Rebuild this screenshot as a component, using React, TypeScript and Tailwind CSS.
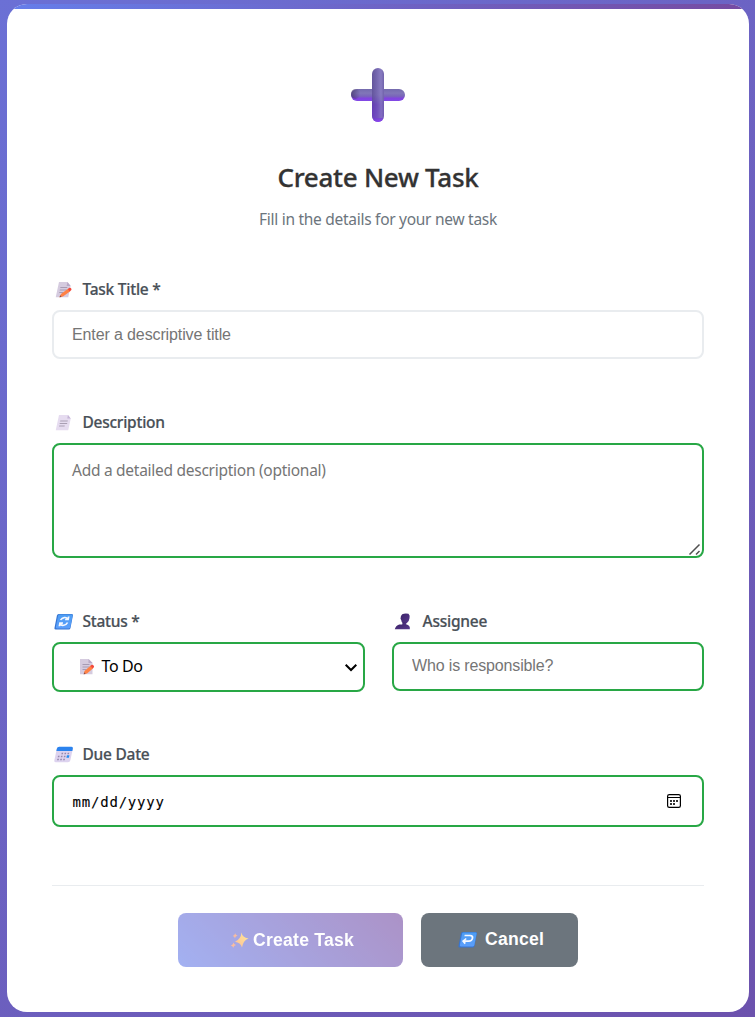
import React from "react";

function Memo({ skew = true }: { skew?: boolean }) {
  return (
    <svg width="18" height="18" viewBox="0 0 18 18" className="shrink-0">
      <g transform={skew ? "translate(3.2 0) skewX(-12)" : "translate(0 0)"}>
        <path d="M2 1h8.500l4 4v11.300H2z" fill="#d5cbdf" />
        <path d="M10.500 1v4h4z" fill="#b7a9c6" />
        <path d="M4.500 6.500h7M4.500 9h7M4.500 11.500h4" stroke="#a79bb3" strokeWidth="1" />
        <path d="M6.500 13l6.300-5.400 2.400 2.600-6.200 5.200-3.300.9z" fill="#ff8145" />
        <path d="M12.300 8l1.500-1.200q1-.3 1.800.6t.3 1.800l-1.200 1.200z" fill="#f4483c" />
        <path d="M5.700 16.300l.6-2 1.400 1.600z" fill="#8b4a45" />
      </g>
    </svg>
  );
}

function PageIcon() {
  return (
    <svg width="18" height="18" viewBox="0 0 18 18" className="shrink-0">
      <g transform="translate(3.2 0) skewX(-12)">
        <path d="M2 1h9l3.500 3.500v11.800H2z" fill="#e6dcf0" />
        <path d="M11 1v3.500h3.500z" fill="#c5b5d6" />
        <path d="M4.500 7h7.500M4.500 9.500h7.500M4.500 12h5.500" stroke="#a99fb3" strokeWidth="1" />
      </g>
    </svg>
  );
}

function BlueTile({ children }: { children: React.ReactNode }) {
  return (
    <svg width="20" height="18" viewBox="0 0 20 18" className="-ml-px shrink-0">
      <defs>
        <linearGradient id="tile" x2="0" y2="1">
          <stop stopColor="#4d9df3" />
          <stop offset="1" stopColor="#5b9efb" />
        </linearGradient>
      </defs>
      <g transform="translate(3.4 0) skewX(-11)">
        <rect x="1" y="1" width="16" height="15.500" rx="1.500" fill="#3775d2" />
        <rect x="2.200" y="1.400" width="14.500" height="14" rx="1.300" fill="url(#tile)" />
        <g fill="none" stroke="#f5f8ff" strokeWidth="1.700">{children}</g>
      </g>
    </svg>
  );
}

function Person() {
  return (
    <svg width="18" height="18" viewBox="0 0 18 18" className="shrink-0">
      <defs>
        <linearGradient id="person" x1="0" y1="0" x2="1" y2="1">
          <stop stopColor="#3b2368" />
          <stop offset="1" stopColor="#59388e" />
        </linearGradient>
      </defs>
      <g fill="url(#person)">
        <path d="M8.200 1.200Q11 0 14.500 .8q1.800 1.500 1 4.500-.5 3.800-2.800 5h-3.500Q7.400 10 7.200 7l-.7-1.200Q6.200 3 8.200 1.200z" />
        <path d="M8.600 9h3.600v3H8.200z" />
        <path d="M.8 16.200q.8-3.400 4.500-4.700h7.500q3.500 1 3 4.700z" />
      </g>
    </svg>
  );
}

function CalendarEmoji() {
  return (
    <svg width="20" height="18" viewBox="0 0 20 18" className="-ml-px shrink-0">
      <g transform="translate(3.4 0) skewX(-12)">
        <rect x="1" y="1" width="16" height="15.300" rx="2" fill="#ddd3ef" />
        <path d="M1 5V2.800q0-2 2-2h12q2 0 2 2V5z" fill="#2b83ee" />
        <path d="M6.700 6.700h1.600v1.600H6.700zM9.700 6.700h1.600v1.600H9.700zM12.700 6.700h1.600v1.600h-1.600zM3.700 9.700h1.600v1.600H3.700zM6.700 9.700h1.600v1.600H6.700zM9.700 9.700h1.600v1.600H9.700zM3.700 12.700h1.600v1.600H3.700zM6.700 12.700h1.600v1.600H6.700zM9.700 12.700h1.600v1.600H9.700z" fill="#9588ad" />
        <path d="M12.500 9.300h2.500v2.500h-2.500z" fill="#248cf2" />
      </g>
    </svg>
  );
}

function Label({ icon, children }: { icon: React.ReactNode; children: React.ReactNode }) {
  return (
    <div className="flex h-[21px] items-center text-[15.5px] font-medium leading-[21px] tracking-[-0.25px] text-[#495057]">
      <span className="flex w-[30.5px] shrink-0 pl-[2px]">{icon}</span>
      <span className="whitespace-nowrap [-webkit-text-stroke:0.2px_#495057]">{children}</span>
    </div>
  );
}

const field = "block w-full rounded-[8px] border-2 bg-white px-[18px] outline-none placeholder:text-[#757575] placeholder:opacity-100";

export default function App() {
  return (
    <div className="h-[1017px] bg-[linear-gradient(135deg,#6b70d5,#6c52ad)] pt-1 pr-[6px] pl-[7px] font-['Noto_Sans',sans-serif]">
      <main className="flex h-[1008px] flex-col overflow-hidden rounded-[20px] bg-white">
        <div className="h-[5px] shrink-0 bg-[linear-gradient(90deg,#667eea,#764ba2)]" />
        <div className="px-[45px]">
          <header className="flex h-[270px] flex-col items-center pt-[58px]">
            <svg width="56" height="56" viewBox="0 0 56 56">
              <defs>
                <linearGradient id="across" x2="0" y2="1">
                  <stop stopColor="#746bad" />
                  <stop offset=".35" stopColor="#8176b8" />
                  <stop offset=".6" stopColor="#7965b9" />
                  <stop offset=".78" stopColor="#8143df" />
                  <stop offset="1" stopColor="#8149e5" />
                </linearGradient>
                <linearGradient id="upright">
                  <stop stopColor="#63559c" />
                  <stop offset=".4" stopColor="#7567b0" />
                  <stop offset=".75" stopColor="#887bc1" />
                  <stop offset="1" stopColor="#7163ab" />
                </linearGradient>
                <linearGradient id="foot" x2="0" y2="1">
                  <stop offset=".5" stopColor="#6429c6" stopOpacity="0" />
                  <stop offset=".68" stopColor="#6429c6" stopOpacity=".55" />
                  <stop offset=".92" stopColor="#7131d4" stopOpacity=".6" />
                  <stop offset="1" stopColor="#8f42fa" />
                </linearGradient>
                <linearGradient id="tip">
                  <stop stopColor="#403267" />
                  <stop offset="1" stopColor="#403267" stopOpacity="0" />
                </linearGradient>
                <linearGradient id="footSide">
                  <stop stopColor="white" />
                  <stop offset=".5" stopColor="#aaa" />
                  <stop offset=".8" stopColor="#444" />
                </linearGradient>
                <mask id="footMask"><rect x="22" y="1" width="12" height="50" fill="url(#footSide)" /><rect x="22" y="51" width="12" height="4" fill="white" /></mask>
              </defs>
              <rect x="1" y="22" width="54" height="12" rx="6" fill="url(#across)" />
              <rect x="1" y="22" width="9" height="10" rx="5" fill="url(#tip)" opacity=".7" />
              <rect x="22" y="1" width="12" height="54" rx="6" fill="url(#upright)" />
              <rect x="22" y="1" width="12" height="54" rx="6" fill="url(#foot)" mask="url(#footMask)" />
            </svg>
            <h1 className="mt-[34px] h-[40px] whitespace-nowrap text-[26px] font-medium leading-[40px] tracking-[-0.28px] text-[#333] [-webkit-text-stroke:0.3px_#333]">Create New Task</h1>
            <p className="mt-[11px] h-[22px] whitespace-nowrap text-[15.5px] leading-[22px] tracking-[-0.28px] text-[#6c757d]">Fill in the details for your new task</p>
          </header>
          <section className="h-[133px]">
            <Label icon={<Memo />}>Task Title *</Label>
            <input className={`${field} mt-[10px] h-[49px] border-[#e9ecef] font-['Liberation_Sans',sans-serif] text-[16px] tracking-[-0.12px]`} placeholder="Enter a descriptive title" />
          </section>
          <section className="h-[199px]">
            <Label icon={<PageIcon />}>Description</Label>
            <div className="relative mt-[10px]">
              <textarea className={`${field} h-[115px] resize-none border-[#28a745] pt-[13px] text-[15.5px] leading-[24px] tracking-[-0.27px]`} placeholder="Add a detailed description (optional)" />
              <svg className="absolute right-[3px] bottom-[2px]" width="13" height="13" viewBox="0 0 13 13">
                <path d="M1.500 11.500L11.500 1.500M8 11.500l3.500-3.500" stroke="#505050" strokeWidth="1.500" />
              </svg>
            </div>
          </section>
          <section className="grid h-[133px] grid-cols-[313px_312px] items-start gap-[27px]">
            <div>
              <Label icon={<BlueTile><path d="M5.500 7a4.200 4 0 0 1 7-1.200M13 3.500v3h-3M13 9.500a4.200 4 0 0 1-7.200 1.500M5.500 13.200v-3h3" /></BlueTile>}>Status *</Label>
              <button className="mt-[10px] flex h-[50px] w-full items-center rounded-[8px] border-2 border-[#28a745] bg-white pl-[24px] pr-[4px] text-[16px] tracking-[-0.4px] text-black">
                <Memo skew={false} />
                <span className="mb-[2px] ml-[5.5px] flex-1 text-left">To Do</span>
                <svg width="16" height="16" viewBox="0 0 16 16"><path d="M2.700 5.800L8 11l5.300-5.200" fill="none" stroke="#000" strokeWidth="2" /></svg>
              </button>
            </div>
            <div>
              <Label icon={<Person />}>Assignee</Label>
              <input className={`${field} mt-[10px] h-[49px] border-[#28a745] pb-[2px] font-['Liberation_Sans',sans-serif] text-[16px] tracking-[-0.15px]`} placeholder="Who is responsible?" />
            </div>
          </section>
          <section className="h-[141px]">
            <Label icon={<CalendarEmoji />}>Due Date</Label>
            <div className="mt-[10px] flex h-[52px] items-center justify-between rounded-[8px] border-2 border-[#28a745] bg-white pr-[20px] pl-[18.5px] text-black">
              <span className="pt-[2px] font-['DejaVu_Sans_Mono',monospace] text-[14px] tracking-[0.8px] [-webkit-text-stroke:0.1px_#000]">mm/dd/yyyy</span>
              <svg width="16" height="16" viewBox="0 0 16 16">
                <rect x="1.600" y="1.600" width="12.800" height="12.800" rx="1.700" fill="none" stroke="#000" strokeWidth="1.200" />
                <path d="M1.500 4.500h13" stroke="#000" strokeWidth="1" />
                <path d="M4 7h2v2H4zM7 7h2v2H7zM10 7h2v2h-2zM4 10h2v2H4zM7 10h2v2H7z" fill="#333" />
              </svg>
            </div>
          </section>
          <footer className="flex justify-center gap-[18px] border-t border-[#e9ecef] pt-[27px] font-['Liberation_Sans',sans-serif] text-[17.6px] font-bold tracking-[0.22px] text-white">
            <button className="flex h-[54px] w-[225px] items-center justify-center gap-[4px] rounded-[8px] bg-[linear-gradient(45deg,#667eea,#764ba2)] pl-[3px] opacity-60">
              <svg width="19" height="19" viewBox="0 0 19 19">
                <defs>
                  <linearGradient id="spark" x1="1" y1="0" x2="0" y2="1">
                    <stop offset=".2" stopColor="#ffd052" />
                    <stop offset="1" stopColor="#fb9258" />
                  </linearGradient>
                </defs>
                <path d="M11.500 1.500q.7 5 7 6-5.500 2-6.500 9-1.500-5-7-5.800Q11 8 11.500 1.500z" fill="url(#spark)" />
                <path d="M5.200 2.200q.2 2 2.400 2.300-2.100.5-2.700 2.800Q4.600 5.300 2.700 5q2-.5 2.500-2.800zM3.500 11.500q.2 2 2.500 2.400-2.200.5-2.800 2.800-.4-2-2.400-2.300 2.200-.6 2.700-2.900z" fill="#f79260" />
              </svg>
              <span>Create Task</span>
            </button>
            <button className="flex h-[54px] w-[157px] items-center justify-center gap-[8px] rounded-[8px] bg-[#6c757d] pb-[2px] pl-[3px]">
              <span className="pt-[2px]"><BlueTile><path d="M5 4.500h5.500q3 0 3 2.800t-3 2.800H5M7.300 7.500L4.700 10.100l2.600 2.600" /></BlueTile></span>
              <span>Cancel</span>
            </button>
          </footer>
        </div>
      </main>
    </div>
  );
}
